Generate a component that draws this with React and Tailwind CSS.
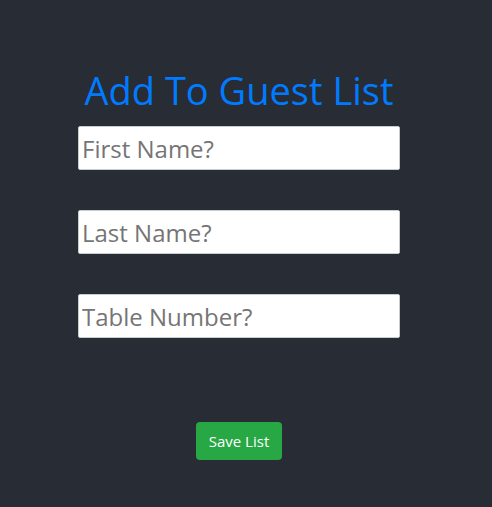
import React from 'react';

const fields = ['First Name?', 'Last Name?', 'Table Number?'];

const App = () => {
  return (
    <div className="min-h-[507px] bg-[#282c34] font-['Open_Sans',sans-serif]">
      <div className="w-[478px] flex flex-col items-center pt-[66px]">
        <h1 className="text-[38px] leading-[48px] text-[#007bff] mb-[12px]">Add To Guest List</h1>
        <div className="flex flex-col gap-[40px]">
          {fields.map((f) => (
            <input
              key={f}
              type="text"
              placeholder={f}
              className="w-[322px] h-[44px] bg-white border border-[#c8ccd2] rounded-[2px] px-[3px] text-[24px] text-[#495057] placeholder:text-[#757575] outline-none"
            />
          ))}
        </div>
        <button className="mt-[84px] w-[86px] h-[38px] bg-[#28a745] text-white text-[15px] rounded-[4px]">
          Save List
        </button>
      </div>
    </div>
  );
};

export default App;
